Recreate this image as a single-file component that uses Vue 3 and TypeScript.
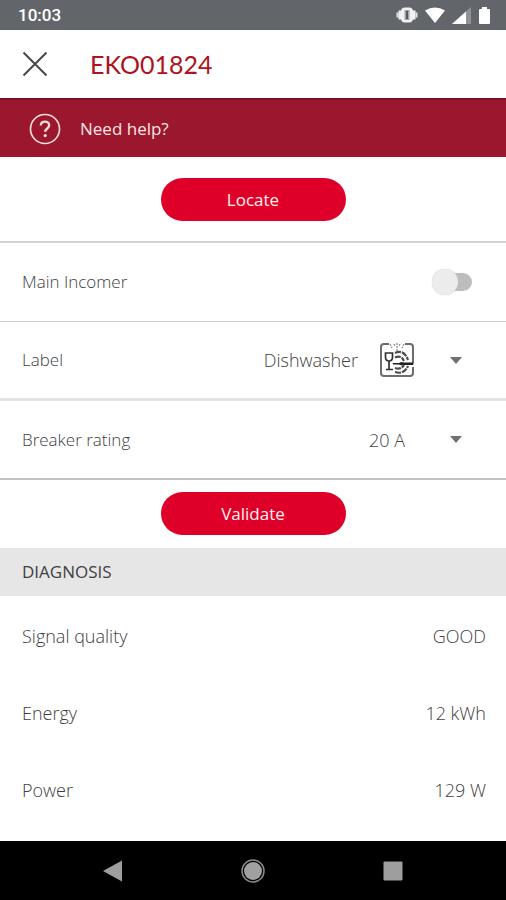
<script setup lang="ts">
import { ref } from 'vue'

interface Reading {
  name: string
  value: string
}

const mainIncomer = ref(false)
const label = ref('Dishwasher')
const rating = ref('20 A')

const readings: Reading[] = [
  { name: 'Signal quality', value: 'GOOD' },
  { name: 'Energy', value: '12 kWh' },
  { name: 'Power', value: '129 W' },
]
</script>

<template>
  <div class="screen">
    <div class="status">
      <span class="clock">10:03</span>
      <div class="status-icons">
        <svg width="22" height="18" viewBox="0 0 22 18" aria-hidden="true">
          <path d="M1.500 6.500v5M20.500 6.500v5" stroke="#e0e1e3" stroke-width="2" />
          <path d="M4 4.500v9M18 4.500v9" stroke="#f0f0f1" stroke-width="3" />
          <rect x="5" y="1.500" width="12" height="15" rx="4" fill="#f1f1f2" />
          <rect x="8.500" y="4" width="5" height="10" fill="#a3a6a9" />
          <rect x="10" y="5" width="2" height="8" fill="#54585c" />
        </svg>
        <svg width="20" height="16" viewBox="0 0 20 16" aria-hidden="true">
          <path d="M0 3.500Q10-2.500 20 3.500L10 16Z" fill="#fff" />
        </svg>
        <svg width="19" height="17" viewBox="0 0 19 17" aria-hidden="true">
          <path d="M0 17L19 0V17Z" fill="#8f9397" />
          <path d="M0 17L14 4.500V17Z" fill="#fff" />
        </svg>
        <svg class="battery" width="11" height="17" viewBox="0 0 11 17" aria-hidden="true">
          <path d="M3 0h5v2h2q1 0 1 1v13q0 1-1 1H1q-1 0-1-1V3q0-1 1-1h2Z" fill="#fff" />
        </svg>
      </div>
    </div>

    <header class="bar">
      <button class="close" type="button" aria-label="Close">
        <svg width="26" height="26" viewBox="0 0 26 26" aria-hidden="true">
          <path d="M1.500 1.500l23 23M24.500 1.500l-23 23" stroke="#45484b" stroke-width="2" />
        </svg>
      </button>
      <h1>EKO01824</h1>
    </header>

    <a class="help" href="#help">
      <svg width="32" height="32" viewBox="0 0 32 32" fill="none" stroke="#f8dcd8" aria-hidden="true">
        <circle cx="16" cy="16" r="14.500" stroke-width="1.700" />
        <path d="M11.800 12.600c0-2.500 1.800-4 4.200-4s4.200 1.500 4.200 3.700c0 3.200-4 3.200-4 6.500" stroke-width="2.300" />
        <circle cx="16.200" cy="22.600" r="1.600" fill="#f8dcd8" stroke="none" />
      </svg>
      <span>Need help?</span>
    </a>

    <main>
      <div class="action action-locate">
        <button class="pill" type="button">Locate</button>
      </div>

      <div class="row line-thin">
        <label for="incomer">Main Incomer</label>
        <input id="incomer" v-model="mainIncomer" class="switch" type="checkbox" role="switch" />
      </div>

      <div class="row line-wide">
        <label for="label">Label</label>
        <div class="picker">
          <select id="label" v-model="label" class="with-icon">
            <option>Dishwasher</option>
          </select>
          <span class="marks">
            <svg width="34" height="34" viewBox="0 0 34 34" fill="none" aria-hidden="true">
              <path d="M9 1H4Q1 1 1 4v26q0 3 3 3h26q3 0 3-3v-6M25 1h5q3 0 3 3v16" stroke="#6c6c6c" stroke-width="2" />
              <path d="M10 1l2 4M14 1l1 2M17 0v8M20 1l-1 2M24 1l-2 4" stroke="#8a8a8a" stroke-width="1.300" stroke-dasharray="2 1" />
              <path d="M5.500 10h7v4q0 4-3.500 4T5.500 14ZM9 18v8M6 26.500h7" stroke="#303030" stroke-width="1.700" />
              <path d="M15 10q9-4 13 7M15 14.500q6-3 9 3.500M15 29q9 3 13-6M15 25q6 2 9-3" stroke="#4c4c4c" stroke-width="2.200" stroke-dasharray="6 1" />
              <path d="M13 20.500h6q2-1.500 5-.500h9v1.500h-9q-3 1-5-.500h-6Z" fill="#202020" stroke="#202020" />
            </svg>
            <svg class="caret" width="12" height="7" viewBox="0 0 12 7" aria-hidden="true"><path d="M0 0h12L6 7Z" /></svg>
          </span>
        </div>
      </div>

      <div class="row line-dark">
        <label for="rating">Breaker rating</label>
        <div class="picker">
          <select id="rating" v-model="rating">
            <option>20 A</option>
          </select>
          <span class="marks">
            <svg class="caret" width="12" height="7" viewBox="0 0 12 7" aria-hidden="true"><path d="M0 0h12L6 7Z" /></svg>
          </span>
        </div>
      </div>

      <div class="action">
        <button class="pill" type="button">Validate</button>
      </div>

      <h2>DIAGNOSIS</h2>
      <dl>
        <div v-for="item in readings" :key="item.name" class="reading">
          <dt>{{ item.name }}</dt>
          <dd>{{ item.value }}</dd>
        </div>
      </dl>
    </main>

    <nav class="system">
      <button type="button" aria-label="Back">
        <svg width="24" height="24" viewBox="0 0 24 24" aria-hidden="true"><path d="M2 12L21 1.500v21Z" fill="#9e9e9e" /></svg>
      </button>
      <button type="button" aria-label="Home">
        <svg width="24" height="24" viewBox="0 0 24 24" aria-hidden="true">
          <circle cx="12" cy="12" r="11" fill="none" stroke="#8a8a8a" stroke-width="1.500" />
          <circle cx="12" cy="12" r="9" fill="#a0a0a0" />
        </svg>
      </button>
      <button type="button" aria-label="Overview">
        <svg width="24" height="24" viewBox="0 0 24 24" aria-hidden="true"><rect x="2.500" y="2.500" width="19" height="19" rx="1" fill="#9e9e9e" /></svg>
      </button>
    </nav>
  </div>
</template>

<style>
body {
  margin: 0;
}
</style>

<style scoped>
.screen {
  display: flex;
  flex-direction: column;
  min-height: 100vh;
  background: #fff;
  color: #404040;
  font: 300 17px/24px "Open Sans", "Noto Sans", sans-serif;
}
button,
select {
  margin: 0;
  padding: 0;
  border: 0;
  background: none;
  color: inherit;
  font: inherit;
}
svg {
  display: block;
}
.status {
  display: flex;
  align-items: center;
  justify-content: space-between;
  height: 30px;
  padding: 0 16px 0 18px;
  background: #62666b;
  color: #fff;
}
.clock {
  font: 500 17px/32px Roboto, sans-serif;
}
.status-icons {
  display: flex;
  align-items: center;
  gap: 7px;
}
.battery {
  margin-left: 1px;
}
.bar {
  display: flex;
  align-items: center;
  gap: 42px;
  height: 68px;
  padding: 0 22px;
}
h1 {
  margin: 0;
  color: #ac1420;
  font: 400 25px/36px Lato, sans-serif;
}
.help {
  display: flex;
  align-items: center;
  gap: 19px;
  box-sizing: border-box;
  height: 59px;
  padding: 0 29px;
  border-top: 2px solid #7c1020;
  background: #9a172d;
  color: #fbe6e3;
  font-weight: 400;
  text-decoration: none;
}
main {
  display: flex;
  flex: 1;
  flex-direction: column;
}
.action {
  display: flex;
  justify-content: center;
  padding: 12px 0 13px;
}
.action-locate {
  padding: 21px 0 20px;
  border-bottom: 2px solid #d4d4d4;
}
.pill {
  width: 185px;
  height: 43px;
  border-radius: 22px;
  background: #df0029;
  color: #fff0ee;
  font-weight: 400;
}
.row {
  display: flex;
  align-items: center;
  justify-content: space-between;
  box-sizing: border-box;
  height: 79px;
  padding: 0 20px 0 22px;
}
.line-thin {
  border-bottom: 1px solid #cfcfcf;
}
.line-wide {
  border-bottom: 3px solid #e4e4e4;
}
.line-dark {
  border-bottom: 2px solid #c2c2c2;
}
.switch {
  display: flex;
  align-items: center;
  width: 36px;
  height: 18px;
  margin: 0 14px 0 0;
  border-radius: 9px;
  background: #bdbdbd;
  appearance: none;
}
.switch::before {
  flex: none;
  width: 26px;
  height: 26px;
  margin-left: -4px;
  border-radius: 50%;
  background: #ececec;
  box-shadow: 0 0 1px #bbb;
  content: "";
}
.switch:checked::before {
  margin-left: 14px;
}
.picker {
  display: grid;
  align-items: center;
}
.picker > * {
  grid-area: 1 / 1;
}
select {
  height: 44px;
  padding-right: 81px;
  font-size: 18px;
  text-align-last: right;
  appearance: none;
}
.with-icon {
  padding-right: 128px;
}
.marks {
  display: flex;
  align-items: center;
  justify-self: end;
  gap: 36px;
  padding-right: 24px;
  pointer-events: none;
}
.caret {
  fill: #707070;
}
h2 {
  margin: 0;
  padding: 0 22px;
  background: #e6e6e6;
  font: inherit;
  font-weight: 400;
  line-height: 48px;
}
dl {
  margin: 0;
  padding: 1px 20px 0 22px;
  font-size: 18px;
}
.reading {
  display: flex;
  align-items: center;
  justify-content: space-between;
  height: 77px;
}
dd {
  margin: 0;
}
.system {
  display: flex;
  align-items: center;
  justify-content: space-between;
  height: 59px;
  padding: 0 101px;
  background: #000;
}
</style>
